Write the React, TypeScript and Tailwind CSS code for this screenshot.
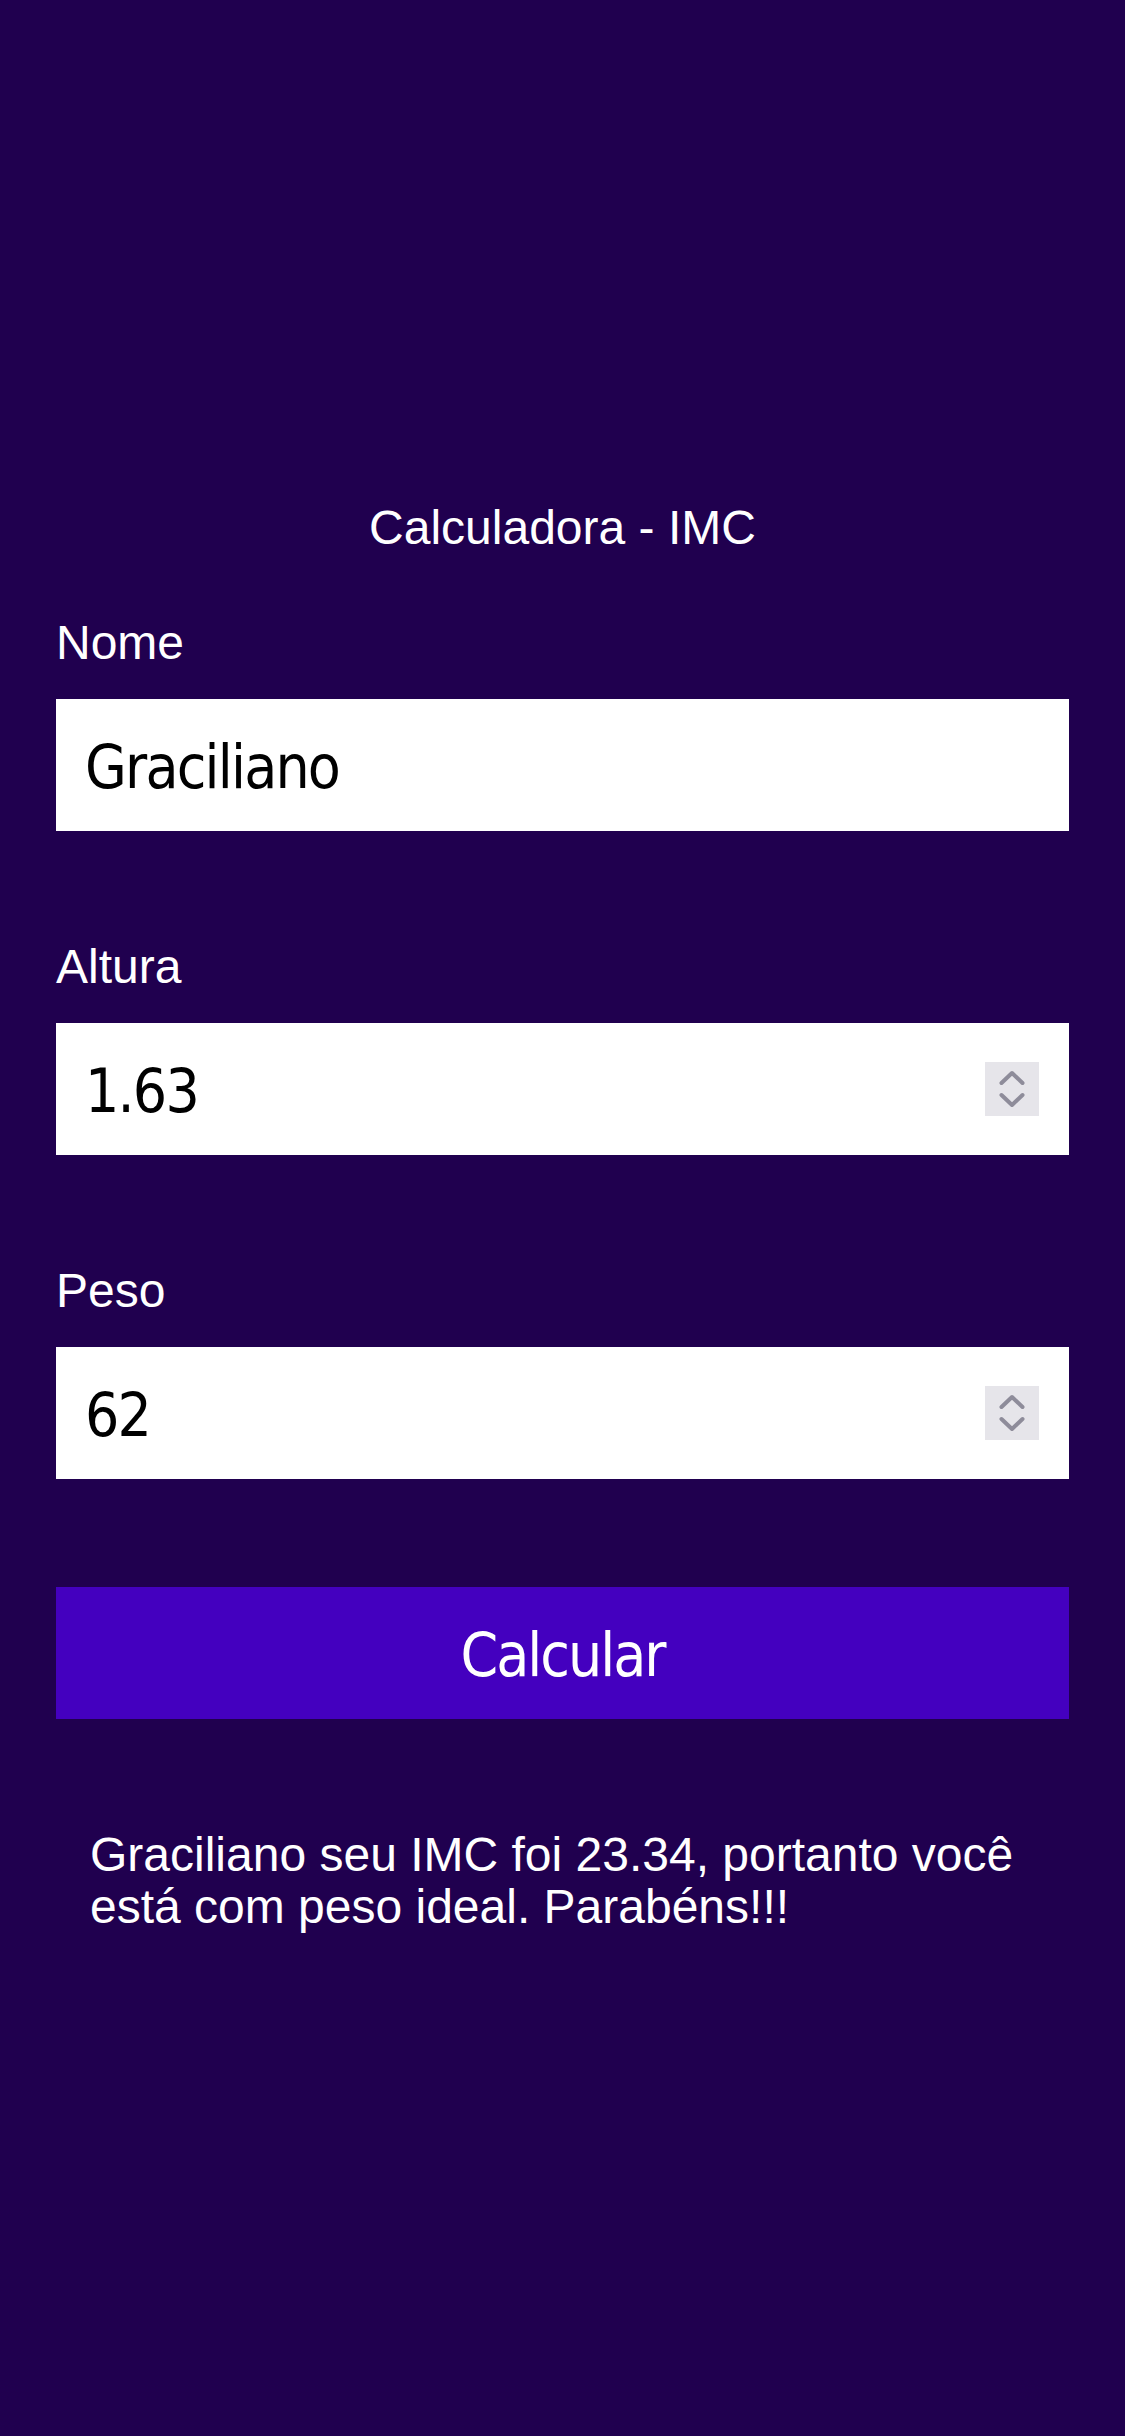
function Spinner() {
  return (
    <div className="mr-[30px] flex h-[54px] w-[54px] shrink-0 items-center justify-center bg-[#e6e5ea]">
      <svg width="54" height="54" viewBox="0 0 54 54" fill="none">
        <path d="M16.5 21L27 11L37.5 21" stroke="#8e8c9a" strokeWidth="4" strokeLinecap="round" strokeLinejoin="round" />
        <path d="M16.5 33L27 43L37.5 33" stroke="#8e8c9a" strokeWidth="4" strokeLinecap="round" strokeLinejoin="round" />
      </svg>
    </div>
  );
}

function Field({ label, value, numeric, first }: { label: string; value: string; numeric?: boolean; first?: boolean }) {
  return (
    <div className={first ? "mt-[60px]" : "mt-[108px]"}>
      <label className="block text-[48px] leading-[55px] text-white">{label}</label>
      <div className="mt-[29px] flex h-[132px] items-center bg-white">
        <input
          type="text"
          defaultValue={value}
          className="h-full min-w-0 flex-1 bg-transparent pt-[4px] pl-[29px] font-['DejaVu_Sans_Condensed','DejaVu_Sans',sans-serif] font-stretch-condensed text-[60px] tracking-[-1.8px] text-black outline-none"
        />
        {numeric && <Spinner />}
      </div>
    </div>
  );
}

export default function App() {
  return (
    <main className="min-h-screen bg-[#20004f] px-[56px] pt-[500px] font-['Liberation_Sans',Arial,sans-serif]">
      <h1 className="text-center text-[48px] leading-[55px] text-white">Calculadora - IMC</h1>

      <Field label="Nome" value="Graciliano" first />
      <Field label="Altura" value="1.63" numeric />
      <Field label="Peso" value="62" numeric />

      <button className="mt-[108px] flex h-[132px] w-full items-center justify-center bg-[#4400bf] pt-[4px] font-['DejaVu_Sans_Condensed','DejaVu_Sans',sans-serif] font-stretch-condensed text-[60px] tracking-[-2px] text-white">
        Calcular
      </button>

      <p className="mt-[110px] px-[34px] text-[48px] leading-[52px] text-white">
        Graciliano seu IMC foi 23.34, portanto você está com peso ideal. Parabéns!!!
      </p>
    </main>
  );
}
